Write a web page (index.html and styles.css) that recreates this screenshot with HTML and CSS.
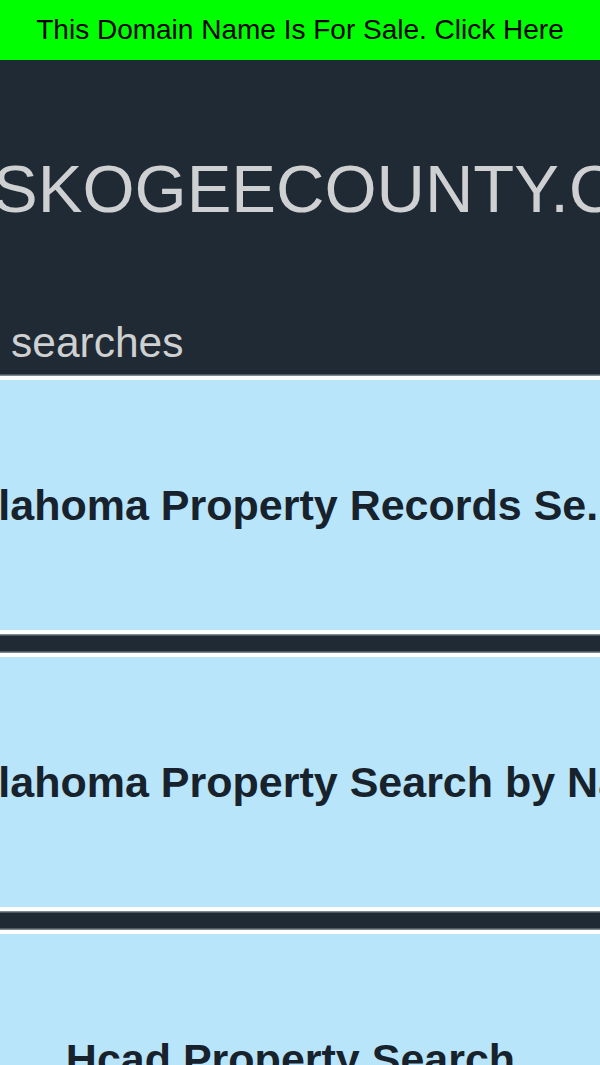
FILE: index.html
```html
<!DOCTYPE html>
<html lang="en">
<head>
<meta charset="utf-8">
<title>MUSKOGEECOUNTY.COM</title>
<link rel="stylesheet" href="styles.css">
</head>
<body>
<a class="banner" href="#">This Domain Name Is For Sale. Click Here</a>
<header class="header">
  <h1 class="title">MUSKOGEECOUNTY.COM</h1>
  <h2 class="subtitle">searches</h2>
</header>
<main class="cards">
  <a class="card" href="#"><span class="card-text is-long">Oklahoma Property Records Se...</span></a>
  <a class="card" href="#"><span class="card-text is-long">Oklahoma Property Search by Name</span></a>
  <a class="card" href="#"><span class="card-text">Hcad Property Search</span></a>
</main>
</body>
</html>
```
FILE: styles.css
```css
html, body {
  margin: 0;
  padding: 0;
}
body {
  background: #1f2a35;
  font-family: "Liberation Sans", Arial, sans-serif;
  overflow: hidden;
  width: 600px;
  height: 1065px;
}
.banner {
  display: flex;
  align-items: center;
  justify-content: center;
  height: 60px;
  background: #00ff00;
  color: #000;
  font-size: 28px;
  text-decoration: none;
  white-space: nowrap;
}
.header {
  display: flex;
  flex-direction: column;
  padding: 95px 0 10px;
}
.title {
  margin: 0;
  display: flex;
  justify-content: center;
  padding-left: 14px;
  font-size: 67px;
  line-height: 67px;
  font-weight: normal;
  color: #cfd0d1;
  white-space: nowrap;
}
.subtitle {
  margin: 100px 0 0;
  padding-left: 11px;
  font-size: 42.5px;
  line-height: 42px;
  font-weight: normal;
  color: #cfd0d1;
}
.cards {
  display: flex;
  flex-direction: column;
  gap: 19px;
  margin: 2px -44px 0 -63px;
}
.card {
  box-sizing: border-box;
  height: 258px;
  display: flex;
  align-items: center;
  background: #b8e5fa;
  border: 4px solid #ffffff;
  box-shadow: 0 0 0 1.5px #7f878f;
  text-decoration: none;
}
.card-text {
  display: block;
  width: 100%;
  text-align: center;
  white-space: nowrap;
  font-size: 43px;
  line-height: 43px;
  font-weight: bold;
  color: #17222c;
}
.card-text.is-long {
  text-align: left;
}
```
